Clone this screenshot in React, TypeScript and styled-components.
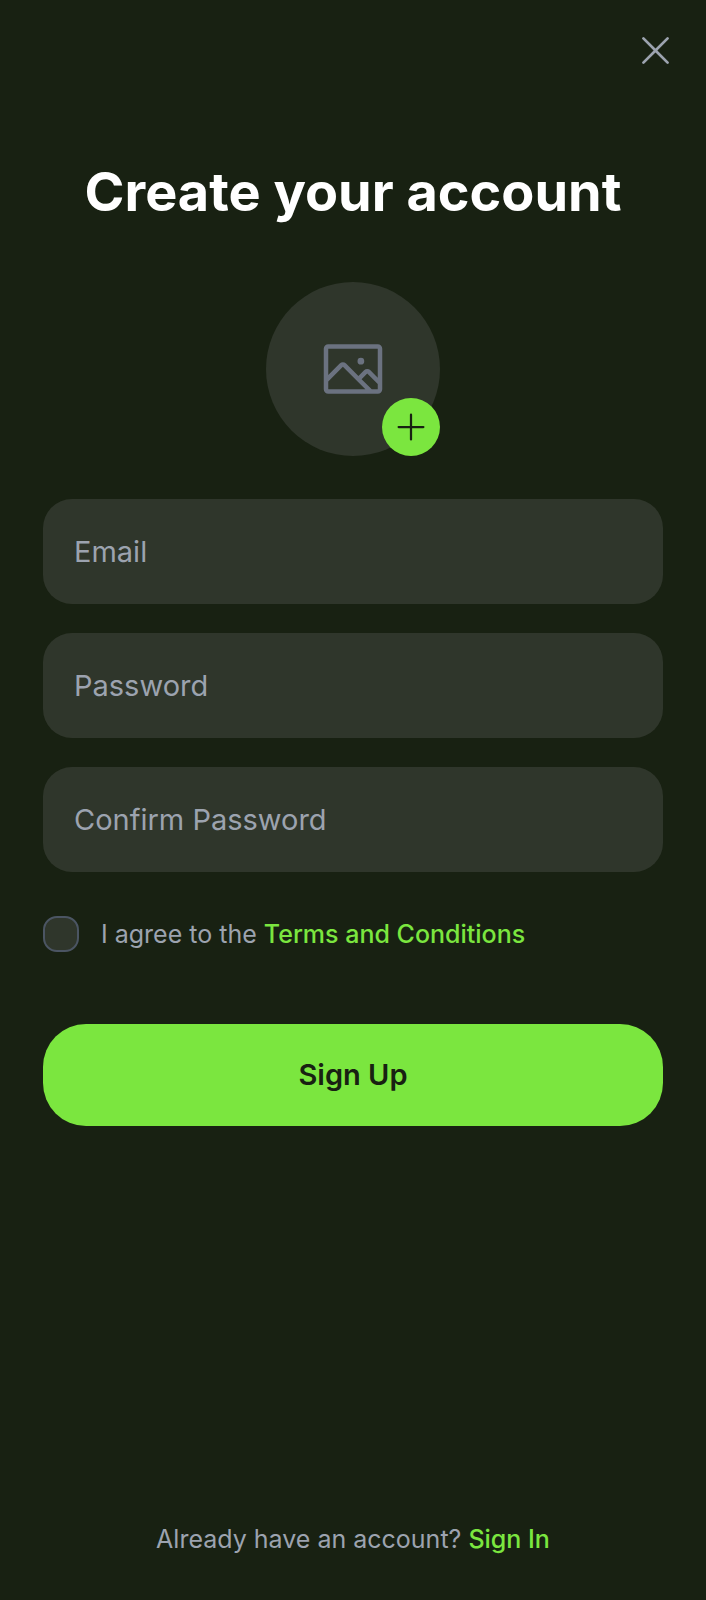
import React, { useState } from "react";
import styled, { createGlobalStyle } from "styled-components";
import { PiImage, PiPlus, PiX } from "react-icons/pi";

const GlobalStyle = createGlobalStyle`
  * { box-sizing: border-box; }
  body {
    margin: 0;
    background: #182112;
    font-family: Inter, "Liberation Sans", sans-serif;
  }
`;

const Screen = styled.main`
  min-height: 100vh;
  display: flex;
  flex-direction: column;
  padding: 29px 43px 43px;
  background: #182112;
`;

const TopBar = styled.header`
  display: flex;
  justify-content: flex-end;
  margin-right: -14px;
`;

const CloseButton = styled.button`
  display: flex;
  padding: 0;
  border: 0;
  background: none;
  color: #9ca3af;
  cursor: pointer;
`;

const Title = styled.h1`
  margin: 88px 0 58px;
  font-size: 54px;
  line-height: 64px;
  font-weight: 700;
  text-align: center;
  color: #ffffff;
`;

const AvatarButton = styled.button`
  position: relative;
  align-self: center;
  display: flex;
  align-items: center;
  justify-content: center;
  width: 174px;
  height: 174px;
  padding: 0;
  border: 0;
  border-radius: 50%;
  background: #2f362b;
  color: #6b7280;
  cursor: pointer;
`;

const AddBadge = styled.span`
  position: absolute;
  right: 0;
  bottom: 0;
  display: flex;
  align-items: center;
  justify-content: center;
  width: 58px;
  height: 58px;
  border-radius: 50%;
  background: #7be63f;
  color: #182112;
`;

const Form = styled.form`
  display: flex;
  flex-direction: column;
  margin-top: 43px;
`;

const Fields = styled.div`
  display: flex;
  flex-direction: column;
  gap: 29px;
`;

const Field = styled.input`
  width: 100%;
  height: 105px;
  padding: 0 31px;
  border: 0;
  border-radius: 29px;
  background: #2f362b;
  color: #ffffff;
  font: 400 29px/40px Inter, "Liberation Sans", sans-serif;
  &::placeholder { color: #9ca3af; opacity: 1; }
`;

const Agreement = styled.div`
  display: flex;
  align-items: center;
  gap: 22px;
  margin: 44px 0 72px;
  font-size: 25px;
  line-height: 36px;
  color: #9ca3af;
`;

const Checkbox = styled.input`
  appearance: none;
  flex: none;
  width: 36px;
  height: 36px;
  margin: 0;
  border: 2px solid #4b5563;
  border-radius: 14px;
  background: #2f362b;
  &:checked { background: #7be63f; }
`;

const TextLink = styled.a`
  color: #7be63f;
  font-weight: 500;
  text-decoration: none;
`;

const SubmitButton = styled.button`
  height: 102px;
  border: 0;
  border-radius: 43px;
  background: #7be63f;
  color: #182112;
  font: 600 29px/40px Inter, "Liberation Sans", sans-serif;
  cursor: pointer;
`;

const Footer = styled.p`
  margin: auto 0 0;
  font-size: 25px;
  line-height: 36px;
  text-align: center;
  color: #9ca3af;
`;

export default function App() {
  const [agreed, setAgreed] = useState(false);
  return (
    <>
      <GlobalStyle />
      <Screen>
        <TopBar>
          <CloseButton type="button" aria-label="Close">
            <PiX size={43} />
          </CloseButton>
        </TopBar>
        <Title>Create your account</Title>
        <AvatarButton type="button" aria-label="Add a profile picture">
          <PiImage size={72} />
          <AddBadge>
            <PiPlus size={36} />
          </AddBadge>
        </AvatarButton>
        <Form onSubmit={(event) => event.preventDefault()}>
          <Fields>
            <Field type="email" aria-label="Email" placeholder="Email" />
            <Field type="password" aria-label="Password" placeholder="Password" />
            <Field type="password" aria-label="Confirm Password" placeholder="Confirm Password" />
          </Fields>
          <Agreement>
            <Checkbox id="agree" type="checkbox" checked={agreed} onChange={() => setAgreed(!agreed)} />
            <label htmlFor="agree">
              I agree to the <TextLink href="#terms">Terms and Conditions</TextLink>
            </label>
          </Agreement>
          <SubmitButton type="submit">Sign Up</SubmitButton>
        </Form>
        <Footer>
          Already have an account? <TextLink href="#sign-in">Sign In</TextLink>
        </Footer>
      </Screen>
    </>
  );
}
